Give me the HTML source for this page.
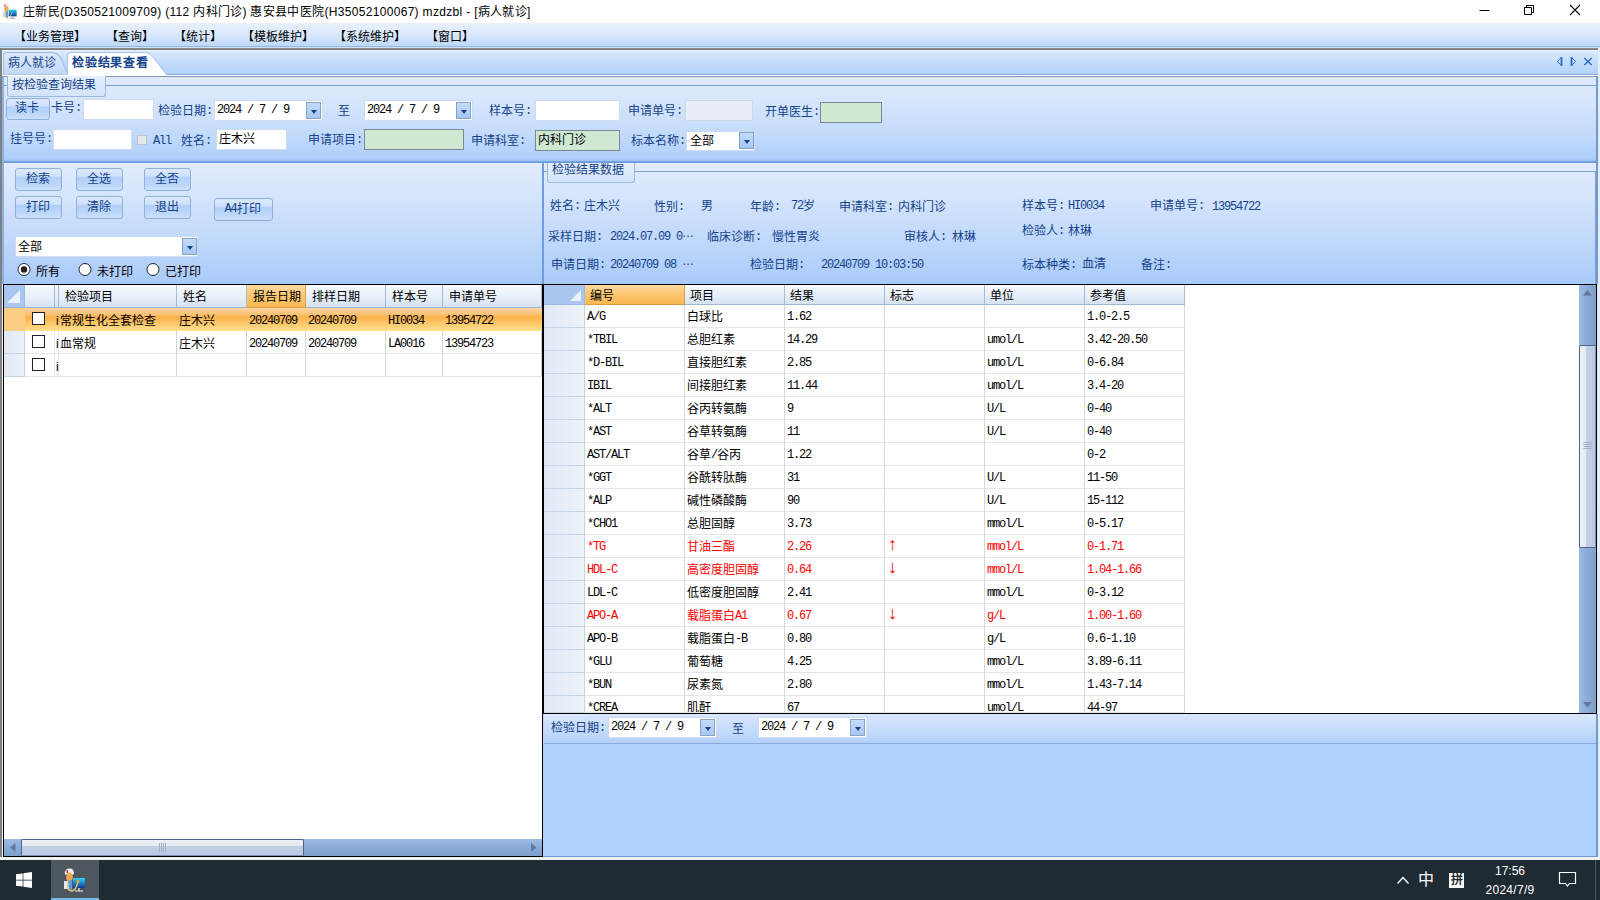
<!DOCTYPE html>
<html lang="zh-CN"><head><meta charset="utf-8"><title>检验结果查看</title><style>
html,body{margin:0;padding:0}
body{width:1600px;height:900px;position:relative;overflow:hidden;background:#bdd8fb;font-family:"Liberation Sans",sans-serif;font-size:12px;color:#000}
div{position:absolute;box-sizing:border-box}
.t{height:16px;line-height:16px;white-space:nowrap;font-size:12px}
.m{font-family:"Liberation Mono",monospace;font-size:12px;letter-spacing:-1.2px;position:relative;top:-1px}
.el{position:relative;top:-4px}
.bl{color:#15428b}
.rd{color:#f00}
.inp{background:#fff;border:1px solid #cddcf1}
.grn{background:#cfe8d2;border:1px solid #7a8896}
.btn{border:1px solid #8fb0dd;border-radius:3px;text-indent:-2px;background:linear-gradient(#dde9fc 0%,#cfe1fb 33%,#b1cff7 42%,#bdd7fa 75%,#cde1fc 100%);color:#15428b;text-align:center;font-size:12px}
.dd{border:1px solid #88a2c6;background:linear-gradient(#c4dbfa,#a6c6f3)}
.dd:after{content:"";position:absolute;left:50%;top:50%;margin:-1px 0 0 -3px;border:3px solid transparent;border-top:4px solid #15428b;border-bottom:0}
.gh{background:linear-gradient(#f7fafe 0%,#e8f0fa 50%,#d6e2f1 100%);border-right:1px solid #a7bbd2;border-bottom:1px solid #9eb6ce}
.gho{background:linear-gradient(#fdd9a0 0%,#fcc670 50%,#fab850 100%);border-right:1px solid #e0a04a;border-bottom:1px solid #d99a40}
.cell{border-right:1px solid #d3d8e0;border-bottom:1px solid #e3e6ea}
.ind{background:linear-gradient(90deg,#dfe9f6,#eef3fa);border-right:1px solid #c5d3e6;border-bottom:1px solid #c5d3e6}
.cb{background:#fff;border:1px solid #222}
.ghi{background:#a9c7ee;border-right:1px solid #9db9e0;border-bottom:1px solid #9db9e0}
.ar{font-family:"Liberation Sans",sans-serif;font-size:18px;height:18px;line-height:18px}
</style></head><body>
<div class="" style="left:0px;top:0px;width:1600px;height:23px;background:#fff"></div>
<svg style="position:absolute;left:2px;top:2px" width="16" height="18" viewBox="0 0 24 26"><defs><linearGradient id="mg0" x1="0" y1="0" x2="0" y2="1"><stop offset="0" stop-color="#35d0f0"/><stop offset="1" stop-color="#0a3a98"/></linearGradient></defs><path d="M2 8Q1 2 6 1.500Q11 1 11 7L9 8Q6 5 2 8Z" fill="#e4ecf8"/><rect x="3.500" y="3" width="1.500" height="3" fill="#e03030"/><ellipse cx="6.500" cy="10" rx="3.300" ry="4.500" fill="#f0a850"/><path d="M1 14H6L7 22H1Z" fill="#cfdcf2"/><path d="M5 14L9 13L9 23L6 23Z" fill="#5a9ae0"/><rect x="10" y="11" width="12" height="10" fill="url(#mg0)"/><path d="M12 24h8M16 21v3" stroke="#8090a8" stroke-width="1.200"/><path d="M5 15Q3 24 9 24Q13 23 15 15" stroke="#f3c860" fill="none" stroke-width="1.300"/></svg>
<div class="t" style="left:23px;top:4px;font-size:12px;letter-spacing:0.32px">庄新民(D350521009709) (112 内科门诊) 惠安县中医院(H35052100067) mzdzbl - [病人就诊]</div>
<svg style="position:absolute;left:1470px;top:0" width="130" height="23" viewBox="0 0 130 23"><g stroke="#000" stroke-width="1" fill="none"><path d="M9.5 10.5h10"/><path d="M54.5 7.5h7v7h-7z" fill="#fff"/><path d="M56.5 7.5v-2h7v7h-2"/><path d="M100 5l10 10M110 5l-10 10" stroke-width="1.100"/></g></svg>
<div class="" style="left:0px;top:23px;width:1600px;height:25px;background:linear-gradient(#e8f0fc 0%,#dbe9fc 45%,#c6ddfb 80%,#b6d4fa 100%)"></div>
<div class="" style="left:0px;top:46px;width:1600px;height:1px;background:#93b8ea"></div>
<div class="" style="left:0px;top:47px;width:1600px;height:1px;background:#cfe1f9"></div>
<div class="t " style="left:14px;top:29px;">【业务管理】</div>
<div class="t " style="left:106px;top:29px;">【查询】</div>
<div class="t " style="left:174px;top:29px;">【统计】</div>
<div class="t " style="left:242px;top:29px;">【模板维护】</div>
<div class="t " style="left:334px;top:29px;">【系统维护】</div>
<div class="t " style="left:426px;top:29px;">【窗口】</div>
<div class="" style="left:0px;top:48px;width:1598px;height:2px;background:linear-gradient(#989898,#707070)"></div>
<div class="" style="left:0px;top:48px;width:2px;height:810px;background:#808080"></div>
<div class="" style="left:2px;top:50px;width:1px;height:808px;background:#eef3fb"></div>
<div class="" style="left:2px;top:50px;width:1596px;height:1px;background:#eef3fb"></div>
<div class="" style="left:1598px;top:48px;width:2px;height:812px;background:#e4eefb"></div>
<div class="" style="left:3px;top:51px;width:1595px;height:23px;background:linear-gradient(#dbe9fc 0%,#c3dcfb 50%,#b2d1fa 100%)"></div>
<div class="" style="left:3px;top:74px;width:1595px;height:1px;background:#86aade"></div>
<div class="" style="left:3px;top:75px;width:1595px;height:1px;background:#fff"></div>
<svg style="position:absolute;left:2px;top:51px" width="180" height="24" viewBox="0 0 180 23" preserveAspectRatio="none"><defs><linearGradient id="tg" x1="0" y1="0" x2="0" y2="1"><stop offset="0" stop-color="#dce9fb"/><stop offset="1" stop-color="#c1d8f8"/></linearGradient></defs><path d="M1.5 23V5Q1.5 1.5 5 1.5H50Q56 1.5 60 9L66 23Z" fill="url(#tg)" stroke="#9ebbe4" stroke-width="1"/><path d="M65.500 23V5Q65.500 1.500 69 1.500H142Q148 1.500 152 7L165 23Z" fill="#fff" stroke="#a9c4ea" stroke-width="1"/><rect x="66" y="22" width="98" height="1.1" fill="#fff"/></svg>
<div class="t bl" style="left:8px;top:55px;">病人就诊</div>
<div class="t bl" style="left:72px;top:55px;font-weight:bold;letter-spacing:0.8px">检验结果查看</div>
<svg style="position:absolute;left:1552px;top:55px" width="44" height="14" viewBox="0 0 44 14"><g stroke="#2a6ad0" fill="none" stroke-width="1"><path d="M9.500 2.500L5.300 6.500L9.500 10.500"/><path d="M9.500 2V11" stroke-width="1.800"/><path d="M19.500 2.500L23.700 6.500L19.500 10.500"/><path d="M19.500 2V11" stroke-width="1.800"/><path d="M32.300 3L39.700 10M39.700 3L32.300 10" stroke-width="1.400"/></g></svg>
<div class="" style="left:3px;top:76px;width:1594px;height:87px;background:linear-gradient(#e0ebfc 0%,#d6e6fc 30%,#c4dbfb 65%,#b0cffb 94%,#a6c7f7 97%,#6e9ddd 98.500%,#6a99da 100%)"></div>
<div class="" style="left:3px;top:76px;width:1594px;height:1px;background:#8296b8"></div>
<div class="" style="left:106px;top:85px;width:1490px;height:1px;background:#7f9fd0"></div>
<div class="" style="left:1596px;top:76px;width:2px;height:87px;background:#7398d4"></div>
<div class="" style="left:3px;top:85px;width:4px;height:1px;background:#7f9fd0"></div>
<div class="" style="left:3px;top:85px;width:1px;height:75px;background:#9fbbe6"></div>
<div class="" style="left:7px;top:76px;width:99px;height:21px;border:1px solid #9bb8e2;border-top:0;border-radius:0 0 3px 3px;background:linear-gradient(#e6effc,#d2e3fb)"></div>
<div class="t bl" style="left:12px;top:77px;">按检验查询结果</div>
<div class="btn" style="left:6px;top:98px;width:44px;height:22px;line-height:19px">读卡</div>
<div class="t bl" style="left:51px;top:100px;">卡号<span class="m">:</span></div>
<div class="inp" style="left:83px;top:99px;width:71px;height:21px;"></div>
<div class="t bl" style="left:158px;top:103px;">检验日期<span class="m">:</span></div>
<div class="inp" style="left:214px;top:100px;width:109px;height:21px;"></div>
<div class="t " style="left:217px;top:102px;"><span class="m">2024&nbsp;/&nbsp;7&nbsp;/&nbsp;9</span></div>
<div class="dd" style="left:306px;top:102px;width:15px;height:17px;"></div>
<div class="t bl" style="left:338px;top:103px;">至</div>
<div class="inp" style="left:364px;top:100px;width:109px;height:21px;"></div>
<div class="t " style="left:367px;top:102px;"><span class="m">2024&nbsp;/&nbsp;7&nbsp;/&nbsp;9</span></div>
<div class="dd" style="left:456px;top:102px;width:15px;height:17px;"></div>
<div class="t bl" style="left:489px;top:103px;">样本号<span class="m">:</span></div>
<div class="inp" style="left:535px;top:100px;width:85px;height:21px;"></div>
<div class="t bl" style="left:628px;top:103px;">申请单号<span class="m">:</span></div>
<div class="inp" style="left:685px;top:100px;width:68px;height:21px;background:#e9eef6;border-color:#cdd8e8"></div>
<div class="t bl" style="left:765px;top:104px;">开单医生<span class="m">:</span></div>
<div class="grn" style="left:820px;top:102px;width:62px;height:21px;"></div>
<div class="t bl" style="left:10px;top:131px;">挂号号<span class="m">:</span></div>
<div class="inp" style="left:53px;top:129px;width:79px;height:21px;"></div>
<div class="" style="left:137px;top:135px;width:10px;height:10px;background:#e6e6e6;border:1px solid #bcc4d0"></div>
<div class="t bl" style="left:153px;top:133px;"><span class="m">All</span></div>
<div class="t bl" style="left:181px;top:133px;">姓名<span class="m">:</span></div>
<div class="inp" style="left:216px;top:129px;width:71px;height:21px;"></div>
<div class="t " style="left:219px;top:131px;">庄木兴</div>
<div class="t bl" style="left:308px;top:132px;">申请项目<span class="m">:</span></div>
<div class="grn" style="left:364px;top:129px;width:100px;height:21px;"></div>
<div class="t bl" style="left:471px;top:133px;">申请科室<span class="m">:</span></div>
<div class="grn" style="left:535px;top:130px;width:85px;height:21px;"></div>
<div class="t " style="left:538px;top:132px;">内科门诊</div>
<div class="t bl" style="left:631px;top:133px;">标本名称<span class="m">:</span></div>
<div class="inp" style="left:686px;top:131px;width:69px;height:20px;"></div>
<div class="t " style="left:690px;top:133px;">全部</div>
<div class="dd" style="left:739px;top:132px;width:15px;height:17px;"></div>
<div class="" style="left:3px;top:163px;width:1593px;height:121px;background:linear-gradient(#e1ecfc 0%,#d3e4fc 30%,#bfd8fb 65%,#a8cafa 100%)"></div>
<div class="" style="left:2px;top:76px;width:2px;height:208px;background:#8ab0e6"></div>
<div class="btn" style="left:15px;top:168px;width:47px;height:23px;line-height:20px">检索</div>
<div class="btn" style="left:76px;top:168px;width:47px;height:23px;line-height:20px">全选</div>
<div class="btn" style="left:144px;top:168px;width:47px;height:23px;line-height:20px">全否</div>
<div class="btn" style="left:15px;top:196px;width:47px;height:23px;line-height:20px">打印</div>
<div class="btn" style="left:76px;top:196px;width:47px;height:23px;line-height:20px">清除</div>
<div class="btn" style="left:144px;top:196px;width:47px;height:23px;line-height:20px">退出</div>
<div class="btn" style="left:214px;top:198px;width:59px;height:23px;line-height:20px"><span class="m">A4</span>打印</div>
<div class="inp" style="left:15px;top:236px;width:183px;height:21px;"></div>
<div class="t " style="left:18px;top:239px;">全部</div>
<div class="dd" style="left:182px;top:238px;width:15px;height:17px;"></div>
<svg style="position:absolute;left:17px;top:263px" width="14" height="14" viewBox="0 0 14 14"><circle cx="7" cy="6.500" r="6" fill="#fff" stroke="#222" stroke-width="1"/><circle cx="7" cy="6.500" r="3.200" fill="#222"/></svg>
<div class="t " style="left:36px;top:264px;">所有</div>
<svg style="position:absolute;left:78px;top:263px" width="14" height="14" viewBox="0 0 14 14"><circle cx="7" cy="6.500" r="6" fill="#fff" stroke="#222" stroke-width="1"/></svg>
<div class="t " style="left:97px;top:264px;">未打印</div>
<svg style="position:absolute;left:146px;top:263px" width="14" height="14" viewBox="0 0 14 14"><circle cx="7" cy="6.500" r="6" fill="#fff" stroke="#222" stroke-width="1"/></svg>
<div class="t " style="left:165px;top:264px;">已打印</div>
<div class="" style="left:542px;top:163px;width:2px;height:121px;background:#6f9ce0"></div>
<div class="" style="left:634px;top:171px;width:962px;height:1px;background:#7f9fd0"></div>
<div class="" style="left:544px;top:171px;width:3px;height:1px;background:#7f9fd0"></div>
<div class="" style="left:1595px;top:171px;width:1px;height:113px;background:#7f9fd0"></div>
<div class="" style="left:547px;top:163px;width:88px;height:20px;border:1px solid #9bb8e2;border-top:0;border-radius:0 0 3px 3px;background:linear-gradient(#e6effc,#d2e3fb)"></div>
<div class="t bl" style="left:552px;top:162px;">检验结果数据</div>
<div class="t bl" style="left:550px;top:198px;">姓名<span class="m">:</span></div>
<div class="t bl" style="left:584px;top:198px;">庄木兴</div>
<div class="t bl" style="left:654px;top:199px;">性别<span class="m">:</span></div>
<div class="t bl" style="left:701px;top:198px;">男</div>
<div class="t bl" style="left:750px;top:199px;">年龄<span class="m">:</span></div>
<div class="t bl" style="left:791px;top:198px;"><span class="m">72</span>岁</div>
<div class="t bl" style="left:839px;top:199px;">申请科室<span class="m">:</span></div>
<div class="t bl" style="left:898px;top:199px;">内科门诊</div>
<div class="t bl" style="left:1022px;top:198px;">样本号<span class="m">:</span></div>
<div class="t bl" style="left:1068px;top:198px;"><span class="m">HI0034</span></div>
<div class="t bl" style="left:1150px;top:198px;">申请单号<span class="m">:</span></div>
<div class="t bl" style="left:1212px;top:199px;"><span class="m">13954722</span></div>
<div class="t bl" style="left:548px;top:229px;">采样日期<span class="m">:</span></div>
<div class="t bl" style="left:610px;top:229px;"><span class="m">2024.07.09&nbsp;0</span><span class="el">…</span></div>
<div class="t bl" style="left:707px;top:229px;">临床诊断<span class="m">:</span></div>
<div class="t bl" style="left:772px;top:229px;">慢性胃炎</div>
<div class="t bl" style="left:904px;top:229px;">审核人<span class="m">:</span></div>
<div class="t bl" style="left:952px;top:229px;">林琳</div>
<div class="t bl" style="left:1022px;top:223px;">检验人<span class="m">:</span></div>
<div class="t bl" style="left:1068px;top:223px;">林琳</div>
<div class="t bl" style="left:551px;top:257px;">申请日期<span class="m">:</span></div>
<div class="t bl" style="left:610px;top:257px;"><span class="m">20240709&nbsp;08&nbsp;</span><span class="el">…</span></div>
<div class="t bl" style="left:750px;top:257px;">检验日期<span class="m">:</span></div>
<div class="t bl" style="left:821px;top:257px;"><span class="m">20240709&nbsp;10:03:50</span></div>
<div class="t bl" style="left:1022px;top:257px;">标本种类<span class="m">:</span></div>
<div class="t bl" style="left:1082px;top:256px;">血清</div>
<div class="t bl" style="left:1141px;top:257px;">备注<span class="m">:</span></div>
<div class="" style="left:3px;top:284px;width:540px;height:573px;background:#000"></div>
<div class="" style="left:4px;top:285px;width:538px;height:571px;background:#fff"></div>
<div class="ghi" style="left:4px;top:285px;width:21px;height:23px;"></div>
<div class="gh" style="left:25px;top:285px;width:30px;height:23px;"></div>
<div class="gh" style="left:55px;top:285px;width:4px;height:23px;"></div>
<div class="gh" style="left:59px;top:285px;width:118px;height:23px;"></div>
<div class="t " style="left:65px;top:289px;">检验项目</div>
<div class="gh" style="left:177px;top:285px;width:70px;height:23px;"></div>
<div class="t " style="left:183px;top:289px;">姓名</div>
<div class="gho" style="left:247px;top:285px;width:59px;height:23px;"></div>
<div class="t " style="left:253px;top:289px;">报告日期</div>
<div class="gh" style="left:306px;top:285px;width:80px;height:23px;"></div>
<div class="t " style="left:312px;top:289px;">排样日期</div>
<div class="gh" style="left:386px;top:285px;width:57px;height:23px;"></div>
<div class="t " style="left:392px;top:289px;">样本号</div>
<div class="gh" style="left:443px;top:285px;width:99px;height:23px;"></div>
<div class="t " style="left:449px;top:289px;">申请单号</div>
<svg style="position:absolute;left:6px;top:289px" width="15" height="15"><path d="M14 1V14H1Z" fill="#f2f5fb" opacity=".9"/></svg>
<div class="" style="left:4px;top:308px;width:538px;height:23px;background:linear-gradient(#fcd6a4 0%,#fbc37a 25%,#fbb24c 40%,#fcc466 62%,#fde08a 100%)"></div>
<div class="" style="left:4px;top:308px;width:21px;height:23px;background:#fcce82"></div>
<div class="cell" style="left:25px;top:308px;width:30px;height:23px;border-color:transparent;border-right-color:transparent"></div>
<div class="cell" style="left:55px;top:308px;width:4px;height:23px;border-color:transparent;border-right-color:transparent"></div>
<div class="cell" style="left:59px;top:308px;width:118px;height:23px;border-color:transparent;"></div>
<div class="cb" style="left:32px;top:312px;width:13px;height:13px;"></div>
<div class="t " style="left:56px;top:313px;">i</div>
<div class="t " style="left:60px;top:313px;">常规生化全套检查</div>
<div class="cell" style="left:177px;top:308px;width:70px;height:23px;border-color:transparent;"></div>
<div class="t " style="left:179px;top:313px;">庄木兴</div>
<div class="cell" style="left:247px;top:308px;width:59px;height:23px;border-color:transparent;"></div>
<div class="t " style="left:249px;top:313px;"><span class="m">20240709</span></div>
<div class="cell" style="left:306px;top:308px;width:80px;height:23px;border-color:transparent;"></div>
<div class="t " style="left:308px;top:313px;"><span class="m">20240709</span></div>
<div class="cell" style="left:386px;top:308px;width:57px;height:23px;border-color:transparent;"></div>
<div class="t " style="left:388px;top:313px;"><span class="m">HI0034</span></div>
<div class="cell" style="left:443px;top:308px;width:99px;height:23px;border-color:transparent;"></div>
<div class="t " style="left:445px;top:313px;"><span class="m">13954722</span></div>
<div class="ind" style="left:4px;top:331px;width:21px;height:23px;"></div>
<div class="cell" style="left:25px;top:331px;width:30px;height:23px;border-right-color:#e3e9f2"></div>
<div class="cell" style="left:55px;top:331px;width:4px;height:23px;border-right-color:#e3e9f2"></div>
<div class="cell" style="left:59px;top:331px;width:118px;height:23px;"></div>
<div class="cb" style="left:32px;top:335px;width:13px;height:13px;"></div>
<div class="t " style="left:56px;top:336px;">i</div>
<div class="t " style="left:60px;top:336px;">血常规</div>
<div class="cell" style="left:177px;top:331px;width:70px;height:23px;"></div>
<div class="t " style="left:179px;top:336px;">庄木兴</div>
<div class="cell" style="left:247px;top:331px;width:59px;height:23px;"></div>
<div class="t " style="left:249px;top:336px;"><span class="m">20240709</span></div>
<div class="cell" style="left:306px;top:331px;width:80px;height:23px;"></div>
<div class="t " style="left:308px;top:336px;"><span class="m">20240709</span></div>
<div class="cell" style="left:386px;top:331px;width:57px;height:23px;"></div>
<div class="t " style="left:388px;top:336px;"><span class="m">LA0016</span></div>
<div class="cell" style="left:443px;top:331px;width:99px;height:23px;"></div>
<div class="t " style="left:445px;top:336px;"><span class="m">13954723</span></div>
<div class="ind" style="left:4px;top:354px;width:21px;height:23px;"></div>
<div class="cell" style="left:25px;top:354px;width:30px;height:23px;border-right-color:#e3e9f2"></div>
<div class="cell" style="left:55px;top:354px;width:4px;height:23px;border-right-color:#e3e9f2"></div>
<div class="cell" style="left:59px;top:354px;width:118px;height:23px;"></div>
<div class="cb" style="left:32px;top:358px;width:13px;height:13px;"></div>
<div class="t " style="left:56px;top:359px;">i</div>
<div class="cell" style="left:177px;top:354px;width:70px;height:23px;"></div>
<div class="cell" style="left:247px;top:354px;width:59px;height:23px;"></div>
<div class="cell" style="left:306px;top:354px;width:80px;height:23px;"></div>
<div class="cell" style="left:386px;top:354px;width:57px;height:23px;"></div>
<div class="cell" style="left:443px;top:354px;width:99px;height:23px;"></div>
<div class="" style="left:4px;top:839px;width:538px;height:17px;background:linear-gradient(#9bbbe6,#8aaad8 50%,#7e9ecc)"></div>
<div class="" style="left:21px;top:839px;width:283px;height:17px;border:1px solid #50648a;border-bottom-color:#7e90ad;border-radius:2px 2px 0 0;background:linear-gradient(#eef1f6 0%,#e4e9f1 40%,#c3d1e5 42%,#b9cae2 100%)"></div>
<svg style="position:absolute;left:4px;top:839px" width="538" height="17"><path d="M11.500 4L6 8.500L11.500 13Z" fill="#66789a"/><path d="M527 4L532.500 8.500L527 13Z" fill="#66789a"/><path d="M155.500 4v9M157.500 4v9M159.500 4v9M161.500 4v9" stroke="#9fb0c8"/></svg>
<div class="" style="left:543px;top:284px;width:1054px;height:430px;background:#000"></div>
<div class="" style="left:544px;top:285px;width:1052px;height:428px;background:#fff"></div>
<div class="ghi" style="left:544px;top:285px;width:41px;height:20px;"></div>
<div class="gho" style="left:585px;top:285px;width:100px;height:20px;"></div>
<div class="t " style="left:590px;top:288px;">编号</div>
<div class="gh" style="left:685px;top:285px;width:100px;height:20px;"></div>
<div class="t " style="left:690px;top:288px;">项目</div>
<div class="gh" style="left:785px;top:285px;width:100px;height:20px;"></div>
<div class="t " style="left:790px;top:288px;">结果</div>
<div class="gh" style="left:885px;top:285px;width:100px;height:20px;"></div>
<div class="t " style="left:890px;top:288px;">标志</div>
<div class="gh" style="left:985px;top:285px;width:100px;height:20px;"></div>
<div class="t " style="left:990px;top:288px;">单位</div>
<div class="gh" style="left:1085px;top:285px;width:100px;height:20px;"></div>
<div class="t " style="left:1090px;top:288px;">参考值</div>
<svg style="position:absolute;left:569px;top:289px" width="13" height="13"><path d="M12 1V12H1Z" fill="#f2f5fb" opacity=".9"/></svg>
<div class="ind" style="left:544px;top:305px;width:41px;height:23px;"></div>
<div class="cell" style="left:585px;top:305px;width:100px;height:23px;overflow:hidden"><div class="t " style="left:2px;top:4px"><span class="m">A/G</span></div></div>
<div class="cell" style="left:685px;top:305px;width:100px;height:23px;overflow:hidden"><div class="t " style="left:2px;top:4px">白球比</div></div>
<div class="cell" style="left:785px;top:305px;width:100px;height:23px;overflow:hidden"><div class="t " style="left:2px;top:4px"><span class="m">1.62</span></div></div>
<div class="cell" style="left:885px;top:305px;width:100px;height:23px;overflow:hidden"></div>
<div class="cell" style="left:985px;top:305px;width:100px;height:23px;overflow:hidden"></div>
<div class="cell" style="left:1085px;top:305px;width:100px;height:23px;overflow:hidden"><div class="t " style="left:2px;top:4px"><span class="m">1.0-2.5</span></div></div>
<div class="ind" style="left:544px;top:328px;width:41px;height:23px;"></div>
<div class="cell" style="left:585px;top:328px;width:100px;height:23px;overflow:hidden"><div class="t " style="left:2px;top:4px"><span class="m">*TBIL</span></div></div>
<div class="cell" style="left:685px;top:328px;width:100px;height:23px;overflow:hidden"><div class="t " style="left:2px;top:4px">总胆红素</div></div>
<div class="cell" style="left:785px;top:328px;width:100px;height:23px;overflow:hidden"><div class="t " style="left:2px;top:4px"><span class="m">14.29</span></div></div>
<div class="cell" style="left:885px;top:328px;width:100px;height:23px;overflow:hidden"></div>
<div class="cell" style="left:985px;top:328px;width:100px;height:23px;overflow:hidden"><div class="t " style="left:2px;top:4px"><span class="m">umol/L</span></div></div>
<div class="cell" style="left:1085px;top:328px;width:100px;height:23px;overflow:hidden"><div class="t " style="left:2px;top:4px"><span class="m">3.42-20.50</span></div></div>
<div class="ind" style="left:544px;top:351px;width:41px;height:23px;"></div>
<div class="cell" style="left:585px;top:351px;width:100px;height:23px;overflow:hidden"><div class="t " style="left:2px;top:4px"><span class="m">*D-BIL</span></div></div>
<div class="cell" style="left:685px;top:351px;width:100px;height:23px;overflow:hidden"><div class="t " style="left:2px;top:4px">直接胆红素</div></div>
<div class="cell" style="left:785px;top:351px;width:100px;height:23px;overflow:hidden"><div class="t " style="left:2px;top:4px"><span class="m">2.85</span></div></div>
<div class="cell" style="left:885px;top:351px;width:100px;height:23px;overflow:hidden"></div>
<div class="cell" style="left:985px;top:351px;width:100px;height:23px;overflow:hidden"><div class="t " style="left:2px;top:4px"><span class="m">umol/L</span></div></div>
<div class="cell" style="left:1085px;top:351px;width:100px;height:23px;overflow:hidden"><div class="t " style="left:2px;top:4px"><span class="m">0-6.84</span></div></div>
<div class="ind" style="left:544px;top:374px;width:41px;height:23px;"></div>
<div class="cell" style="left:585px;top:374px;width:100px;height:23px;overflow:hidden"><div class="t " style="left:2px;top:4px"><span class="m">IBIL</span></div></div>
<div class="cell" style="left:685px;top:374px;width:100px;height:23px;overflow:hidden"><div class="t " style="left:2px;top:4px">间接胆红素</div></div>
<div class="cell" style="left:785px;top:374px;width:100px;height:23px;overflow:hidden"><div class="t " style="left:2px;top:4px"><span class="m">11.44</span></div></div>
<div class="cell" style="left:885px;top:374px;width:100px;height:23px;overflow:hidden"></div>
<div class="cell" style="left:985px;top:374px;width:100px;height:23px;overflow:hidden"><div class="t " style="left:2px;top:4px"><span class="m">umol/L</span></div></div>
<div class="cell" style="left:1085px;top:374px;width:100px;height:23px;overflow:hidden"><div class="t " style="left:2px;top:4px"><span class="m">3.4-20</span></div></div>
<div class="ind" style="left:544px;top:397px;width:41px;height:23px;"></div>
<div class="cell" style="left:585px;top:397px;width:100px;height:23px;overflow:hidden"><div class="t " style="left:2px;top:4px"><span class="m">*ALT</span></div></div>
<div class="cell" style="left:685px;top:397px;width:100px;height:23px;overflow:hidden"><div class="t " style="left:2px;top:4px">谷丙转氨酶</div></div>
<div class="cell" style="left:785px;top:397px;width:100px;height:23px;overflow:hidden"><div class="t " style="left:2px;top:4px"><span class="m">9</span></div></div>
<div class="cell" style="left:885px;top:397px;width:100px;height:23px;overflow:hidden"></div>
<div class="cell" style="left:985px;top:397px;width:100px;height:23px;overflow:hidden"><div class="t " style="left:2px;top:4px"><span class="m">U/L</span></div></div>
<div class="cell" style="left:1085px;top:397px;width:100px;height:23px;overflow:hidden"><div class="t " style="left:2px;top:4px"><span class="m">0-40</span></div></div>
<div class="ind" style="left:544px;top:420px;width:41px;height:23px;"></div>
<div class="cell" style="left:585px;top:420px;width:100px;height:23px;overflow:hidden"><div class="t " style="left:2px;top:4px"><span class="m">*AST</span></div></div>
<div class="cell" style="left:685px;top:420px;width:100px;height:23px;overflow:hidden"><div class="t " style="left:2px;top:4px">谷草转氨酶</div></div>
<div class="cell" style="left:785px;top:420px;width:100px;height:23px;overflow:hidden"><div class="t " style="left:2px;top:4px"><span class="m">11</span></div></div>
<div class="cell" style="left:885px;top:420px;width:100px;height:23px;overflow:hidden"></div>
<div class="cell" style="left:985px;top:420px;width:100px;height:23px;overflow:hidden"><div class="t " style="left:2px;top:4px"><span class="m">U/L</span></div></div>
<div class="cell" style="left:1085px;top:420px;width:100px;height:23px;overflow:hidden"><div class="t " style="left:2px;top:4px"><span class="m">0-40</span></div></div>
<div class="ind" style="left:544px;top:443px;width:41px;height:23px;"></div>
<div class="cell" style="left:585px;top:443px;width:100px;height:23px;overflow:hidden"><div class="t " style="left:2px;top:4px"><span class="m">AST/ALT</span></div></div>
<div class="cell" style="left:685px;top:443px;width:100px;height:23px;overflow:hidden"><div class="t " style="left:2px;top:4px">谷草<span class="m">/</span>谷丙</div></div>
<div class="cell" style="left:785px;top:443px;width:100px;height:23px;overflow:hidden"><div class="t " style="left:2px;top:4px"><span class="m">1.22</span></div></div>
<div class="cell" style="left:885px;top:443px;width:100px;height:23px;overflow:hidden"></div>
<div class="cell" style="left:985px;top:443px;width:100px;height:23px;overflow:hidden"></div>
<div class="cell" style="left:1085px;top:443px;width:100px;height:23px;overflow:hidden"><div class="t " style="left:2px;top:4px"><span class="m">0-2</span></div></div>
<div class="ind" style="left:544px;top:466px;width:41px;height:23px;"></div>
<div class="cell" style="left:585px;top:466px;width:100px;height:23px;overflow:hidden"><div class="t " style="left:2px;top:4px"><span class="m">*GGT</span></div></div>
<div class="cell" style="left:685px;top:466px;width:100px;height:23px;overflow:hidden"><div class="t " style="left:2px;top:4px">谷酰转肽酶</div></div>
<div class="cell" style="left:785px;top:466px;width:100px;height:23px;overflow:hidden"><div class="t " style="left:2px;top:4px"><span class="m">31</span></div></div>
<div class="cell" style="left:885px;top:466px;width:100px;height:23px;overflow:hidden"></div>
<div class="cell" style="left:985px;top:466px;width:100px;height:23px;overflow:hidden"><div class="t " style="left:2px;top:4px"><span class="m">U/L</span></div></div>
<div class="cell" style="left:1085px;top:466px;width:100px;height:23px;overflow:hidden"><div class="t " style="left:2px;top:4px"><span class="m">11-50</span></div></div>
<div class="ind" style="left:544px;top:489px;width:41px;height:23px;"></div>
<div class="cell" style="left:585px;top:489px;width:100px;height:23px;overflow:hidden"><div class="t " style="left:2px;top:4px"><span class="m">*ALP</span></div></div>
<div class="cell" style="left:685px;top:489px;width:100px;height:23px;overflow:hidden"><div class="t " style="left:2px;top:4px">碱性磷酸酶</div></div>
<div class="cell" style="left:785px;top:489px;width:100px;height:23px;overflow:hidden"><div class="t " style="left:2px;top:4px"><span class="m">90</span></div></div>
<div class="cell" style="left:885px;top:489px;width:100px;height:23px;overflow:hidden"></div>
<div class="cell" style="left:985px;top:489px;width:100px;height:23px;overflow:hidden"><div class="t " style="left:2px;top:4px"><span class="m">U/L</span></div></div>
<div class="cell" style="left:1085px;top:489px;width:100px;height:23px;overflow:hidden"><div class="t " style="left:2px;top:4px"><span class="m">15-112</span></div></div>
<div class="ind" style="left:544px;top:512px;width:41px;height:23px;"></div>
<div class="cell" style="left:585px;top:512px;width:100px;height:23px;overflow:hidden"><div class="t " style="left:2px;top:4px"><span class="m">*CHO1</span></div></div>
<div class="cell" style="left:685px;top:512px;width:100px;height:23px;overflow:hidden"><div class="t " style="left:2px;top:4px">总胆固醇</div></div>
<div class="cell" style="left:785px;top:512px;width:100px;height:23px;overflow:hidden"><div class="t " style="left:2px;top:4px"><span class="m">3.73</span></div></div>
<div class="cell" style="left:885px;top:512px;width:100px;height:23px;overflow:hidden"></div>
<div class="cell" style="left:985px;top:512px;width:100px;height:23px;overflow:hidden"><div class="t " style="left:2px;top:4px"><span class="m">mmol/L</span></div></div>
<div class="cell" style="left:1085px;top:512px;width:100px;height:23px;overflow:hidden"><div class="t " style="left:2px;top:4px"><span class="m">0-5.17</span></div></div>
<div class="ind" style="left:544px;top:535px;width:41px;height:23px;"></div>
<div class="cell" style="left:585px;top:535px;width:100px;height:23px;overflow:hidden"><div class="t rd" style="left:2px;top:4px"><span class="m">*TG</span></div></div>
<div class="cell" style="left:685px;top:535px;width:100px;height:23px;overflow:hidden"><div class="t rd" style="left:2px;top:4px">甘油三酯</div></div>
<div class="cell" style="left:785px;top:535px;width:100px;height:23px;overflow:hidden"><div class="t rd" style="left:2px;top:4px"><span class="m">2.26</span></div></div>
<div class="cell" style="left:885px;top:535px;width:100px;height:23px;overflow:hidden"><div class="t rd ar" style="left:3px;top:0px">↑</div></div>
<div class="cell" style="left:985px;top:535px;width:100px;height:23px;overflow:hidden"><div class="t rd" style="left:2px;top:4px"><span class="m">mmol/L</span></div></div>
<div class="cell" style="left:1085px;top:535px;width:100px;height:23px;overflow:hidden"><div class="t rd" style="left:2px;top:4px"><span class="m">0-1.71</span></div></div>
<div class="ind" style="left:544px;top:558px;width:41px;height:23px;"></div>
<div class="cell" style="left:585px;top:558px;width:100px;height:23px;overflow:hidden"><div class="t rd" style="left:2px;top:4px"><span class="m">HDL-C</span></div></div>
<div class="cell" style="left:685px;top:558px;width:100px;height:23px;overflow:hidden"><div class="t rd" style="left:2px;top:4px">高密度胆固醇</div></div>
<div class="cell" style="left:785px;top:558px;width:100px;height:23px;overflow:hidden"><div class="t rd" style="left:2px;top:4px"><span class="m">0.64</span></div></div>
<div class="cell" style="left:885px;top:558px;width:100px;height:23px;overflow:hidden"><div class="t rd ar" style="left:3px;top:0px">↓</div></div>
<div class="cell" style="left:985px;top:558px;width:100px;height:23px;overflow:hidden"><div class="t rd" style="left:2px;top:4px"><span class="m">mmol/L</span></div></div>
<div class="cell" style="left:1085px;top:558px;width:100px;height:23px;overflow:hidden"><div class="t rd" style="left:2px;top:4px"><span class="m">1.04-1.66</span></div></div>
<div class="ind" style="left:544px;top:581px;width:41px;height:23px;"></div>
<div class="cell" style="left:585px;top:581px;width:100px;height:23px;overflow:hidden"><div class="t " style="left:2px;top:4px"><span class="m">LDL-C</span></div></div>
<div class="cell" style="left:685px;top:581px;width:100px;height:23px;overflow:hidden"><div class="t " style="left:2px;top:4px">低密度胆固醇</div></div>
<div class="cell" style="left:785px;top:581px;width:100px;height:23px;overflow:hidden"><div class="t " style="left:2px;top:4px"><span class="m">2.41</span></div></div>
<div class="cell" style="left:885px;top:581px;width:100px;height:23px;overflow:hidden"></div>
<div class="cell" style="left:985px;top:581px;width:100px;height:23px;overflow:hidden"><div class="t " style="left:2px;top:4px"><span class="m">mmol/L</span></div></div>
<div class="cell" style="left:1085px;top:581px;width:100px;height:23px;overflow:hidden"><div class="t " style="left:2px;top:4px"><span class="m">0-3.12</span></div></div>
<div class="ind" style="left:544px;top:604px;width:41px;height:23px;"></div>
<div class="cell" style="left:585px;top:604px;width:100px;height:23px;overflow:hidden"><div class="t rd" style="left:2px;top:4px"><span class="m">APO-A</span></div></div>
<div class="cell" style="left:685px;top:604px;width:100px;height:23px;overflow:hidden"><div class="t rd" style="left:2px;top:4px">载脂蛋白<span class="m">A1</span></div></div>
<div class="cell" style="left:785px;top:604px;width:100px;height:23px;overflow:hidden"><div class="t rd" style="left:2px;top:4px"><span class="m">0.67</span></div></div>
<div class="cell" style="left:885px;top:604px;width:100px;height:23px;overflow:hidden"><div class="t rd ar" style="left:3px;top:0px">↓</div></div>
<div class="cell" style="left:985px;top:604px;width:100px;height:23px;overflow:hidden"><div class="t rd" style="left:2px;top:4px"><span class="m">g/L</span></div></div>
<div class="cell" style="left:1085px;top:604px;width:100px;height:23px;overflow:hidden"><div class="t rd" style="left:2px;top:4px"><span class="m">1.00-1.60</span></div></div>
<div class="ind" style="left:544px;top:627px;width:41px;height:23px;"></div>
<div class="cell" style="left:585px;top:627px;width:100px;height:23px;overflow:hidden"><div class="t " style="left:2px;top:4px"><span class="m">APO-B</span></div></div>
<div class="cell" style="left:685px;top:627px;width:100px;height:23px;overflow:hidden"><div class="t " style="left:2px;top:4px">载脂蛋白<span class="m">-B</span></div></div>
<div class="cell" style="left:785px;top:627px;width:100px;height:23px;overflow:hidden"><div class="t " style="left:2px;top:4px"><span class="m">0.80</span></div></div>
<div class="cell" style="left:885px;top:627px;width:100px;height:23px;overflow:hidden"></div>
<div class="cell" style="left:985px;top:627px;width:100px;height:23px;overflow:hidden"><div class="t " style="left:2px;top:4px"><span class="m">g/L</span></div></div>
<div class="cell" style="left:1085px;top:627px;width:100px;height:23px;overflow:hidden"><div class="t " style="left:2px;top:4px"><span class="m">0.6-1.10</span></div></div>
<div class="ind" style="left:544px;top:650px;width:41px;height:23px;"></div>
<div class="cell" style="left:585px;top:650px;width:100px;height:23px;overflow:hidden"><div class="t " style="left:2px;top:4px"><span class="m">*GLU</span></div></div>
<div class="cell" style="left:685px;top:650px;width:100px;height:23px;overflow:hidden"><div class="t " style="left:2px;top:4px">葡萄糖</div></div>
<div class="cell" style="left:785px;top:650px;width:100px;height:23px;overflow:hidden"><div class="t " style="left:2px;top:4px"><span class="m">4.25</span></div></div>
<div class="cell" style="left:885px;top:650px;width:100px;height:23px;overflow:hidden"></div>
<div class="cell" style="left:985px;top:650px;width:100px;height:23px;overflow:hidden"><div class="t " style="left:2px;top:4px"><span class="m">mmol/L</span></div></div>
<div class="cell" style="left:1085px;top:650px;width:100px;height:23px;overflow:hidden"><div class="t " style="left:2px;top:4px"><span class="m">3.89-6.11</span></div></div>
<div class="ind" style="left:544px;top:673px;width:41px;height:23px;"></div>
<div class="cell" style="left:585px;top:673px;width:100px;height:23px;overflow:hidden"><div class="t " style="left:2px;top:4px"><span class="m">*BUN</span></div></div>
<div class="cell" style="left:685px;top:673px;width:100px;height:23px;overflow:hidden"><div class="t " style="left:2px;top:4px">尿素氮</div></div>
<div class="cell" style="left:785px;top:673px;width:100px;height:23px;overflow:hidden"><div class="t " style="left:2px;top:4px"><span class="m">2.80</span></div></div>
<div class="cell" style="left:885px;top:673px;width:100px;height:23px;overflow:hidden"></div>
<div class="cell" style="left:985px;top:673px;width:100px;height:23px;overflow:hidden"><div class="t " style="left:2px;top:4px"><span class="m">mmol/L</span></div></div>
<div class="cell" style="left:1085px;top:673px;width:100px;height:23px;overflow:hidden"><div class="t " style="left:2px;top:4px"><span class="m">1.43-7.14</span></div></div>
<div class="ind" style="left:544px;top:696px;width:41px;height:17px;"></div>
<div class="cell" style="left:585px;top:696px;width:100px;height:17px;overflow:hidden"><div class="t " style="left:2px;top:4px"><span class="m">*CREA</span></div></div>
<div class="cell" style="left:685px;top:696px;width:100px;height:17px;overflow:hidden"><div class="t " style="left:2px;top:4px">肌酐</div></div>
<div class="cell" style="left:785px;top:696px;width:100px;height:17px;overflow:hidden"><div class="t " style="left:2px;top:4px"><span class="m">67</span></div></div>
<div class="cell" style="left:885px;top:696px;width:100px;height:17px;overflow:hidden"></div>
<div class="cell" style="left:985px;top:696px;width:100px;height:17px;overflow:hidden"><div class="t " style="left:2px;top:4px"><span class="m">umol/L</span></div></div>
<div class="cell" style="left:1085px;top:696px;width:100px;height:17px;overflow:hidden"><div class="t " style="left:2px;top:4px"><span class="m">44-97</span></div></div>
<div class="" style="left:1579px;top:285px;width:17px;height:428px;background:linear-gradient(90deg,#9bbbe6,#8aaad8 50%,#7e9ecc)"></div>
<div class="" style="left:1579px;top:345px;width:17px;height:203px;border:1px solid #50648a;border-right-color:#7e90ad;border-radius:2px 0 0 2px;background:linear-gradient(90deg,#eef1f6 0%,#e4e9f1 40%,#c3d1e5 42%,#b9cae2 100%)"></div>
<svg style="position:absolute;left:1579px;top:285px" width="17" height="428"><path d="M4 10.500L8.500 5L13 10.500Z" fill="#66789a"/><path d="M4 417L8.500 422.500L13 417Z" fill="#66789a"/><path d="M4.500 157.500h8M4.500 159.500h8M4.500 161.500h8M4.500 163.500h8" stroke="#9fb0c8"/></svg>
<div class="" style="left:544px;top:714px;width:1052px;height:30px;background:linear-gradient(#d9e7fc,#c3dafb 60%,#b3d0fa);border-bottom:1px solid #88aadd"></div>
<div class="t bl" style="left:551px;top:720px;">检验日期<span class="m">:</span></div>
<div class="inp" style="left:608px;top:717px;width:109px;height:21px;"></div>
<div class="t " style="left:611px;top:719px;"><span class="m">2024&nbsp;/&nbsp;7&nbsp;/&nbsp;9</span></div>
<div class="dd" style="left:700px;top:719px;width:15px;height:17px;"></div>
<div class="t bl" style="left:732px;top:721px;">至</div>
<div class="inp" style="left:758px;top:717px;width:109px;height:21px;"></div>
<div class="t " style="left:761px;top:719px;"><span class="m">2024&nbsp;/&nbsp;7&nbsp;/&nbsp;9</span></div>
<div class="dd" style="left:850px;top:719px;width:15px;height:17px;"></div>
<div class="" style="left:543px;top:744px;width:1053px;height:112px;background:#afd0fc"></div>
<div class="" style="left:543px;top:856px;width:1053px;height:1px;background:#6d9ad4"></div>
<div class="" style="left:1596px;top:163px;width:2px;height:121px;background:#7398d4"></div>
<div class="" style="left:1596px;top:714px;width:2px;height:143px;background:#7398d4"></div>
<div class="" style="left:1597px;top:284px;width:1px;height:430px;background:#dfe9f8"></div>
<div class="" style="left:0px;top:857px;width:1600px;height:3px;background:#f0f0f0"></div>
<div class="" style="left:0px;top:860px;width:1600px;height:40px;background:#1f2b33"></div>
<svg style="position:absolute;left:16px;top:872px" width="16" height="16" viewBox="0 0 16 16"><path d="M0 2.300L6.700 1.400V7.700H0ZM7.400 1.300L16 0V7.700H7.400ZM0 8.400H6.700V14.600L0 13.700ZM7.400 8.400H16V16L7.400 14.700Z" fill="#fff"/></svg>
<div class="" style="left:51px;top:860px;width:48px;height:40px;background:#4c575e"></div>
<div class="" style="left:51px;top:898px;width:48px;height:2px;background:#76b9ed"></div>
<svg style="position:absolute;left:63px;top:867px" width="24" height="26" viewBox="0 0 24 26"><defs><linearGradient id="mg" x1="0" y1="0" x2="0" y2="1"><stop offset="0" stop-color="#35d0f0"/><stop offset="1" stop-color="#0a3a98"/></linearGradient></defs><path d="M2 8Q1 2 6 1.500Q11 1 11 7L9 8Q6 5 2 8Z" fill="#eef3fb"/><rect x="3.500" y="3" width="1.500" height="3" fill="#e03030"/><ellipse cx="6.500" cy="10" rx="3.300" ry="4.500" fill="#f0a850"/><path d="M1 14H6L7 22H1Z" fill="#dfe8f8"/><path d="M5 14L9 13L9 23L6 23Z" fill="#5a9ae0"/><rect x="10" y="11" width="12" height="10" fill="url(#mg)"/><path d="M12 24h8M16 21v3" stroke="#e8eef5" stroke-width="1.200"/><path d="M5 15Q3 24 9 24Q13 23 15 15" stroke="#f3c860" fill="none" stroke-width="1.300"/><circle cx="15" cy="14.500" r="1.600" fill="#e8a040"/></svg>
<svg style="position:absolute;left:1396px;top:873px" width="14" height="14"><path d="M1.500 10.500L7 4.500L12.500 10.500" stroke="#fff" stroke-width="1.300" fill="none"/></svg>
<div class="t" style="left:1418px;top:870px;color:#fff;font-size:16px;height:20px;line-height:20px">中</div>
<div class="" style="left:1449px;top:873px;width:15px;height:15px;background:#fff;color:#1f2b33;font-size:12px;line-height:15px;text-align:center;font-weight:bold">拼</div>
<div class="t" style="left:1470px;top:863px;width:80px;text-align:center;color:#fff;font-size:12px">17:56</div>
<div class="t" style="left:1470px;top:882px;width:80px;text-align:center;color:#fff;font-size:12px;letter-spacing:0.3px">2024/7/9</div>
<svg style="position:absolute;left:1558px;top:871px" width="20" height="18"><path d="M1.500 1.500H17.500V12.500H11.500L9.500 15L7.500 12.500H1.500Z" stroke="#fff" fill="none" stroke-width="1.200"/></svg>
<div class="" style="left:1595px;top:860px;width:1px;height:40px;background:#4a5560"></div>
</body></html>
